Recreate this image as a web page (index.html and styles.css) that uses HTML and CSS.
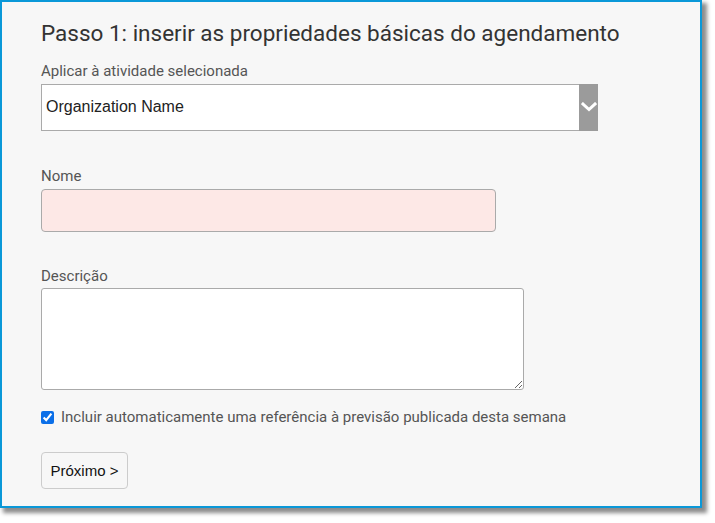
FILE: index.html
```html
<!DOCTYPE html>
<html lang="pt">
<head>
<meta charset="utf-8">
<title>Passo 1</title>
<link rel="stylesheet" href="styles.css">
</head>
<body>
<div class="frame">
  <h1 class="title">Passo 1: inserir as propriedades básicas do agendamento</h1>
  <label class="label label-first">Aplicar à atividade selecionada</label>
  <div class="select">
    <span class="select-text">Organization Name</span>
    <span class="select-arrow">
      <svg width="16" height="10" viewBox="0 0 16 10"><path d="M2 2 L8 7.5 L14 2" fill="none" stroke="#fff" stroke-width="3" stroke-linecap="square"/></svg>
    </span>
  </div>
  <label class="label label-nome" for="nome">Nome</label>
  <input id="nome" class="input-nome" type="text">
  <label class="label label-desc" for="desc">Descrição</label>
  <textarea id="desc" class="textarea"></textarea>
  <div class="check-row">
    <input type="checkbox" class="checkbox" checked id="inc">
    <label for="inc" class="check-label">Incluir automaticamente uma referência à previsão publicada desta semana</label>
  </div>
  <button class="btn" type="button">Próximo &gt;</button>
</div>
</body>
</html>
```

FILE: styles.css
```css
html, body {
  margin: 0;
  padding: 0;
  background: #ffffff;
}
body {
  height: 523px;
}
.frame {
  box-sizing: border-box;
  width: 702px;
  height: 508px;
  border: 2px solid #0a98d8;
  background: #f7f7f7;
  box-shadow: 4px 4px 4px 1px rgba(0, 0, 0, 0.45);
  padding: 18px 0 0 39px;
  display: flex;
  flex-direction: column;
  align-items: flex-start;
  font-family: Roboto, "Liberation Sans", sans-serif;
}
.title {
  margin: 0;
  font-weight: 400;
  font-size: 22.5px;
  line-height: 26px;
  color: #333333;
}
.label {
  display: block;
  font-size: 15px;
  line-height: 18px;
  color: #555555;
}
.label-first {
  margin-top: 16px;
}
.select {
  box-sizing: border-box;
  margin-top: 4px;
  width: 557px;
  height: 47px;
  border: 1px solid #aaaaaa;
  background: #ffffff;
  display: flex;
  align-items: center;
}
.select-text {
  flex: 1;
  padding-left: 4px;
  margin-top: -1px;
  font-family: "Liberation Sans", Arial, sans-serif;
  font-size: 16px;
  color: #222222;
}
.select-arrow {
  width: 19px;
  height: 47px;
  margin: -1px -1px -1px 0;
  background: #9b9b9b;
  display: flex;
  align-items: center;
  justify-content: center;
}
.select-arrow svg {
  display: block;
  margin-top: -1px;
}
.label-nome {
  margin-top: 36px;
}
.input-nome {
  box-sizing: border-box;
  margin: 4px 0 0 0;
  width: 455px;
  height: 43px;
  border: 1px solid #aaaaaa;
  border-radius: 4px;
  background: #fde8e6;
  padding: 0;
}
.label-desc {
  margin-top: 35px;
}
.textarea {
  box-sizing: border-box;
  margin: 3px 0 0 0;
  width: 483px;
  height: 102px;
  border: 1px solid #aaaaaa;
  border-radius: 3px;
  background: #ffffff;
  padding: 0;
  resize: both;
}
.check-row {
  margin-top: 18px;
  display: flex;
  align-items: center;
}
.checkbox {
  width: 13px;
  height: 13px;
  margin: 1px 7px 0 0;
  accent-color: #0b6fe8;
}
.check-label {
  font-size: 15px;
  line-height: 18px;
  color: #555555;
}
.btn {
  box-sizing: border-box;
  margin-top: 26px;
  width: 87px;
  height: 37px;
  border: 1px solid #cccccc;
  border-radius: 4px;
  background: #f7f7f7;
  font-family: "Liberation Sans", Arial, sans-serif;
  font-size: 15px;
  color: #111111;
  padding: 0;
}
```
